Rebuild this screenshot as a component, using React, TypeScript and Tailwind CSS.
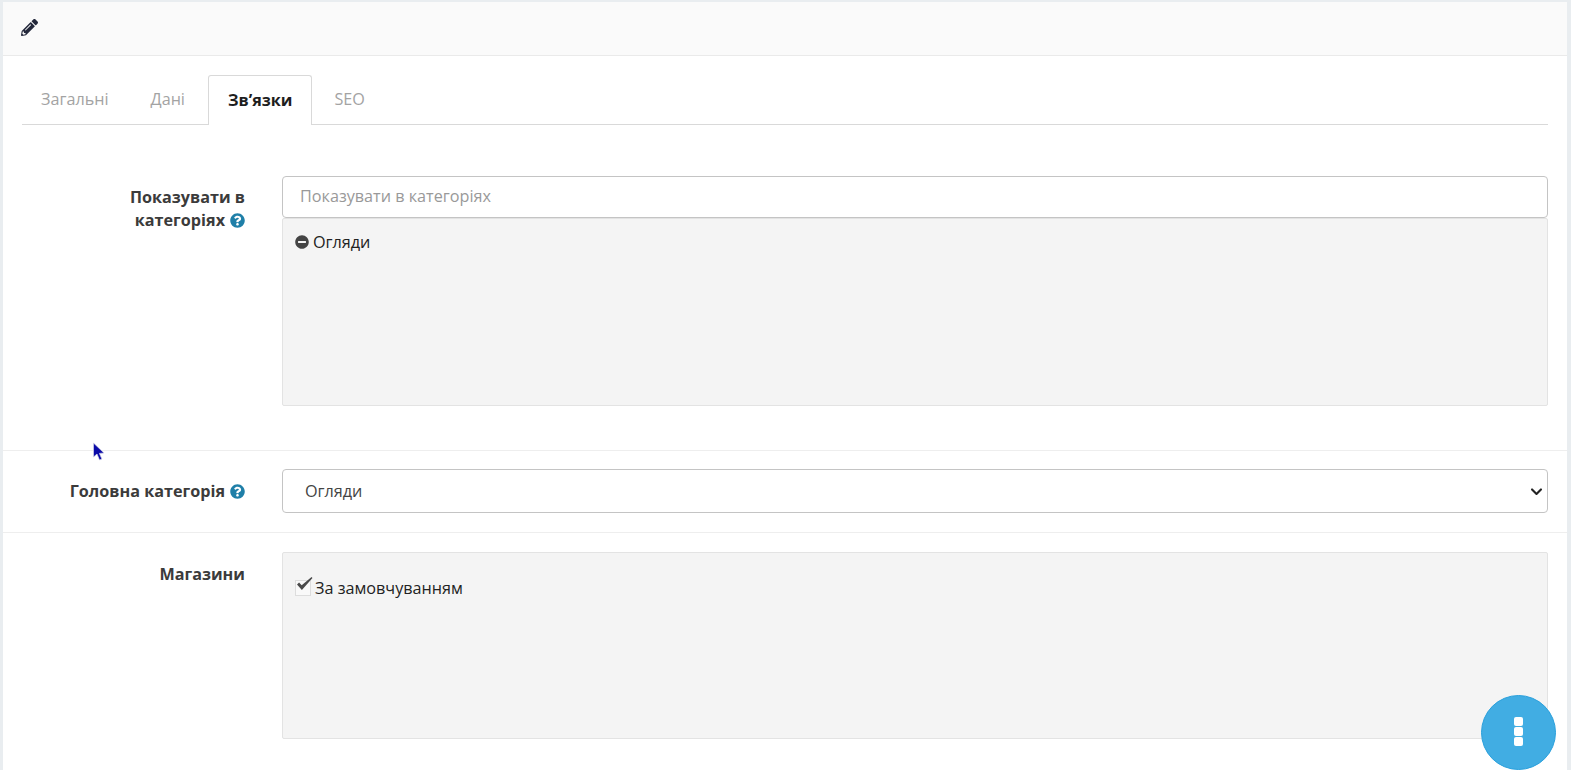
import React from 'react';
import { FaPencilAlt, FaQuestionCircle, FaMinusCircle } from 'react-icons/fa';

const Help: React.FC = () => (
  <FaQuestionCircle className="inline-block text-[15px] text-[#1f7fa8] ml-[5px] align-[-2px]" />
);

const App: React.FC = () => {
  return (
    <div className="relative h-[770px] w-full overflow-hidden bg-white font-['Open_Sans',sans-serif] text-[16.2px] text-[#333]">
      <div className="flex h-full flex-col border-l-[3px] border-r-[4px] border-t-2 border-[#e9edf0] bg-white">
        {/* Panel heading */}
        <div className="flex h-[54px] shrink-0 items-center border-b border-[#eaeaea] bg-[#fafafa] pb-[2px] pl-[18px]">
          <FaPencilAlt className="text-[17px] text-[#23283b]" />
        </div>

        <div className="px-[19px] pt-[19px]">
          {/* Tabs */}
          <div className="flex h-[50px] border-b border-[#d9d9d9]">
            <div className="pl-[19px] pr-[19px] pt-[12px] text-[#a3a3a3]">Загальні</div>
            <div className="px-[23px] pt-[12px] text-[#a3a3a3]">Дані</div>
            <div className="-mb-px h-[50px] rounded-t-[3px] border border-b-0 border-[#d9d9d9] bg-white px-[19px] pt-[12px] font-bold text-[#1e1e1e]">Зв’язки</div>
            <div className="px-[22px] pt-[12px] text-[#a3a3a3]">SEO</div>
          </div>
        </div>

        {/* Row: categories */}
        <div className="flex h-[326px] shrink-0 border-b border-[#eeeeee] pt-[51px]">
          <div className="w-[242px] shrink-0 pt-[10px] text-right font-bold leading-[23px] text-[#3b3b3b]">
            Показувати в<br />категоріях<Help />
          </div>
          <div className="ml-[37px] w-[1266px]">
            <input
              placeholder="Показувати в категоріях"
              className="h-[42px] w-full rounded-[4px] border border-[#c4c4c4] bg-white px-[17px] pb-[2px] text-[16.2px] outline-none placeholder:text-[#999]"
            />
            <div className="h-[188px] rounded-[2px] border border-[#e3e3e3] bg-[#f4f4f4] px-3 pt-[12px] text-[#222]">
              <div className="flex items-center gap-1 leading-[22px]">
                <FaMinusCircle className="text-[14px] text-[#444]" />
                <span>Огляди</span>
              </div>
            </div>
          </div>
        </div>

        {/* Row: main category */}
        <div className="flex h-[82px] shrink-0 items-center border-b border-[#eeeeee] pb-[1px]">
          <div className="w-[242px] shrink-0 pt-[1px] text-right font-bold text-[#3b3b3b]">
            Головна категорія<Help />
          </div>
          <div className="ml-[37px] flex h-[44px] w-[1266px] items-center justify-between rounded-[4px] border border-[#c4c4c4] bg-white pl-[22px] pr-[4px] pt-[1px] text-[#444]">
            <span>Огляди</span>
            <svg viewBox="0 0 16 16" className="h-[13px] w-[13px] text-[#222]" fill="none" stroke="currentColor" strokeWidth="2.6" strokeLinecap="round" strokeLinejoin="round">
              <path d="M2.5 5.5 8 11l5.5-5.5" />
            </svg>
          </div>
        </div>

        {/* Row: stores */}
        <div className="flex pt-[19px]">
          <div className="w-[242px] shrink-0 pt-[10px] text-right font-bold text-[#3b3b3b]">Магазини</div>
          <div className="ml-[37px] h-[187px] w-[1266px] rounded-[2px] border border-[#e3e3e3] bg-[#f4f4f4] px-3 pt-[23px] text-[#222]">
            <div className="flex items-center gap-[4px]">
              <span className="relative h-[16px] w-[16px] border border-[#dddddd] bg-[#f9f9f9]">
                <svg viewBox="0 0 18 16" className="absolute -top-[5px] left-0 h-[15px] w-[17px] text-[#4a4a4a]">
                  <path d="M1 9 3.2 7 6 9.8 16.5 1 17.5 2 6.2 15z" fill="currentColor" />
                </svg>
              </span>
              <span>За замовчуванням</span>
            </div>
          </div>
        </div>
      </div>

      {/* Mouse cursor captured in the screenshot */}
      <svg viewBox="0 0 14 20" className="absolute left-[92px] top-[442px] h-[20px] w-[14px]">
        <path d="M1.5 1v14l3.5-3 2.5 6 2.4-1-2.5-5.6 4.6-.4z" fill="#0a0aa8" stroke="#d6d6e6" strokeWidth="0.7" />
      </svg>

      {/* Floating button */}
      <div className="absolute left-[1481px] top-[695px] flex h-[75px] w-[75px] flex-col items-center justify-center gap-px rounded-full border border-[#2aa0dc] bg-[#41ade3] pb-[2px]">
        <span className="h-[9px] w-[9px] rounded-[2px] bg-white" />
        <span className="h-[9px] w-[9px] rounded-[2px] bg-white" />
        <span className="h-[9px] w-[9px] rounded-[2px] bg-white" />
      </div>
    </div>
  );
};

export default App;
